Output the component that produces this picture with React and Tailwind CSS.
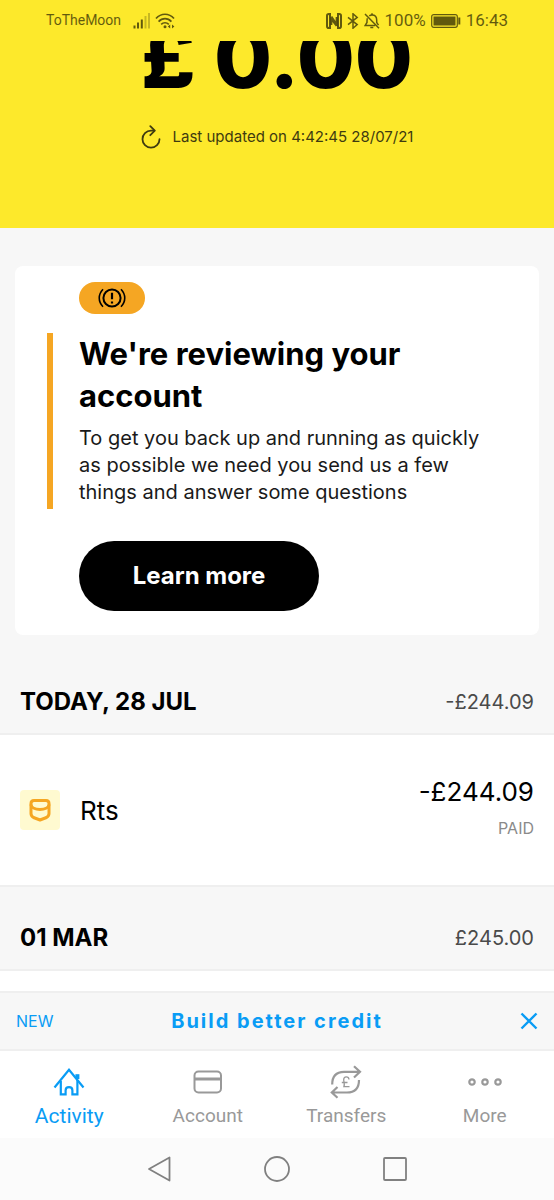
import React from 'react';

const SignalIcon = () => (
  <svg width="18" height="16" viewBox="0 0 18 16" fill="currentColor">
    <rect x="0.5" y="12.5" width="2" height="3" />
    <rect x="4" y="9.5" width="2" height="6" />
    <rect x="7.8" y="6.5" width="2" height="9" />
    <rect x="11.5" y="3" width="2" height="12.5" opacity="0.35" />
    <rect x="15" y="0" width="2" height="15.5" opacity="0.35" />
  </svg>
);

const WifiIcon = () => (
  <svg width="20" height="16" viewBox="0 0 20 16" fill="none" stroke="currentColor" strokeWidth="1.7">
    <path d="M1 5.5C6-.2 14-.2 19 5.5" />
    <path d="M3.6 8.6c3.6-4 9.2-4 12.8 0" />
    <path d="M6.2 11.4c2.2-2.2 5.4-2.2 7.6 0" />
    <circle cx="10" cy="13.8" r="1.5" fill="currentColor" stroke="none" />
    <path d="M15.2 11.6v4l-2.4-2zM17 11.6v4l2.4-2z" fill="currentColor" stroke="none" />
  </svg>
);

const NfcIcon = () => (
  <svg width="16" height="16" viewBox="0 0 16 16" fill="none" stroke="currentColor">
    <path d="M5 1H2.8C1.8 1 1 1.8 1 2.8v10.4c0 1 .8 1.8 1.8 1.8H4V1M11 15h2.2c1 0 1.8-.8 1.8-1.8V2.8c0-1-.8-1.8-1.8-1.8H12v14" strokeWidth="2" />
    <path d="M5.5 3.5L10.5 11V4M5.5 12V6.5L10.5 13" strokeWidth="1.7" />
  </svg>
);

const BluetoothIcon = () => (
  <svg width="12" height="16" viewBox="0 0 12 16" fill="none" stroke="currentColor" strokeWidth="1.5">
    <path d="M1 4.3l9.2 7.3L6 15.2V.8l4.2 3.6L1 11.7" />
  </svg>
);

const MutedBellIcon = () => (
  <svg width="16" height="16" viewBox="0 0 16 16" fill="none" stroke="currentColor" strokeWidth="1.5">
    <path d="M3.4 5.2C2.9 6.3 3 8 3 9.5L1.2 12.4h10M5.3 2.9C6 2.3 7 2 8 2c2.800 0 4.700 2 4.700 5v2.500l1.800 2.600" />
    <path d="M6.300 14.600h3M8 .300v1.500M1 1l14 14.300" />
  </svg>
);

const BatteryIcon = () => (
  <svg width="30" height="14" viewBox="0 0 30 14" fill="none">
    <rect x="0.7" y="0.7" width="25.600" height="12.600" rx="2" stroke="currentColor" strokeWidth="1.200" />
    <rect x="2.500" y="2.500" width="22" height="9" fill="currentColor" />
    <path d="M28.300 3.500v7" stroke="currentColor" strokeWidth="2" />
  </svg>
);

const RefreshIcon = () => (
  <svg width="20" height="24" viewBox="0 0 20 24" fill="none" stroke="currentColor" strokeWidth="1.800" strokeLinecap="round" strokeLinejoin="round">
    <path d="M13 5.700H10A8.500 8.500 0 1 0 18.500 14.200" />
    <path d="M9.300 1.200l4.500 4.500-4.500 4.500" />
  </svg>
);

const WarningIcon = () => (
  <svg width="28" height="22" viewBox="0 0 28 22" fill="none" stroke="black" strokeWidth="2">
    <circle cx="14" cy="11" r="8.600" />
    <path d="M5 2.200C0 7.500 0 14.500 5 19.800M23 2.200c5 5.300 5 12.300 0 17.600" strokeWidth="1.600" />
    <path d="M14 5.800v6.400M14 14.400v2.200" strokeWidth="2.200" />
  </svg>
);

const PotIcon = () => (
  <svg width="22" height="24" viewBox="0 0 22 24" fill="none" stroke="#f5a623" strokeWidth="3" strokeLinejoin="round">
    <path d="M2 5.500Q2 2.500 5 2.500H17Q20 2.500 20 5.500V15.500Q20 18 17.500 19.500L11 22 4.500 19.500Q2 18 2 15.500Z" />
    <path d="M2 6.500C2.500 13 19.500 13 20 6.500" />
  </svg>
);

const HomeIcon = () => (
  <svg width="32" height="28" viewBox="0 0 32 28" fill="none" stroke="currentColor" strokeWidth="2.200">
    <path d="M1.500 19.500L16 1.800 30.500 19.500" />
    <path d="M7.800 13v13.400h4.800V22.500c0-4.500 6.800-4.500 6.800 0v3.900h5V12" />
    <path d="M24.400 11V6.200" strokeWidth="4" />
  </svg>
);

const CardIcon = () => (
  <svg width="30" height="24" viewBox="0 0 30 24" fill="none" stroke="currentColor" strokeWidth="2">
    <rect x="1.500" y="1.500" width="26.500" height="21" rx="4" />
    <path d="M1.500 9h26.500" strokeWidth="3" />
  </svg>
);

const TransferIcon = () => (
  <svg width="32" height="34" viewBox="0 0 32 34" fill="none" stroke="currentColor" strokeWidth="2.200">
    <path d="M2.200 19.500C2.200 11 6 6.800 14 6.800h16M24 1.200l6 5.600-6 5.700" />
    <path d="M29 15c0 8.500-4 12.500-12 12.500H2M7.500 22L1.800 27.500l5.700 5.300" />
    <path d="M19 14.500c-.300-3.500-5.300-3.500-5.300.200 0 2.300 1.300 4 .200 7h5.600M11.800 17.500h5.700" strokeWidth="1.300" />
  </svg>
);

const MoreIcon = () => (
  <svg width="34" height="8" viewBox="0 0 34 8" fill="none" stroke="currentColor" strokeWidth="2.200">
    <circle cx="4" cy="4" r="2.700" />
    <circle cx="17" cy="4" r="2.700" />
    <circle cx="30" cy="4" r="2.700" />
  </svg>
);

const CloseIcon = () => (
  <svg width="18" height="18" viewBox="0 0 18 18" fill="none" stroke="currentColor" strokeWidth="2.400">
    <path d="M1.500 1.500l15 15M16.500 1.500l-15 15" />
  </svg>
);

const StatusBar = () => (
  <div className="flex h-[41px] items-center justify-between px-[46px] font-[Roboto,sans-serif] text-[#1f1c00]/70">
    <div className="flex items-center">
      <span className="text-[14px]">ToTheMoon</span>
      <span className="ml-3"><SignalIcon /></span>
      <span className="ml-1"><WifiIcon /></span>
    </div>
    <div className="flex items-center gap-[5px]">
      <NfcIcon />
      <BluetoothIcon />
      <MutedBellIcon />
      <span className="text-[17px]">100%</span>
      <BatteryIcon />
      <span className="text-[17px]">16:43</span>
    </div>
  </div>
);

const ReviewCard = () => (
  <section className="mx-[15px] mt-[38px] rounded-lg bg-white pt-4 pb-6 pl-8">
    <div className="ml-8 flex h-8 w-[66px] items-center justify-center rounded-full bg-[#f5a623]">
      <WarningIcon />
    </div>
    <div className="mt-[19px] border-l-6 border-[#f5a623] pl-[26px]">
      <h1 className="text-[31px] leading-[42px] font-bold">
        We're reviewing your<br />account
      </h1>
      <p className="mt-2 pb-[3px] text-[20px] leading-[27px] text-[#1a1a1a]">
        To get you back up and running as quickly<br />
        as possible we need you send us a few<br />
        things and answer some questions
      </p>
    </div>
    <button className="mt-8 ml-8 h-[70px] w-[240px] rounded-full bg-black text-[24px] font-bold text-white">
      Learn more
    </button>
  </section>
);

const DayHeader = ({ day, total }) => (
  <div className="flex h-[84px] items-center justify-between border-b-2 border-[#efefef] px-5 pt-5">
    <h2 className="text-[24px] font-bold">{day}</h2>
    <span className="text-[20px] text-[#4a4a4a]">{total}</span>
  </div>
);

const Transaction = ({ name, amount, status }) => (
  <div className="flex h-[152px] items-center border-b-2 border-[#efefef] bg-white px-5">
    <span className="flex size-10 items-center justify-center rounded-sm bg-[#fffad0]">
      <PotIcon />
    </span>
    <span className="ml-5 text-[26px]">{name}</span>
    <div className="ml-auto text-right">
      <p className="text-[26px] leading-[36px]">{amount}</p>
      <p className="text-[16px] leading-[36px] text-[#8a8a8a]">{status}</p>
    </div>
  </div>
);

const tabs = [
  { label: 'Activity', icon: HomeIcon, active: true },
  { label: 'Account', icon: CardIcon },
  { label: 'Transfers', icon: TransferIcon },
  { label: 'More', icon: MoreIcon },
];

const TabBar = () => (
  <nav className="grid h-[87px] grid-cols-4 bg-white font-[Roboto,sans-serif]">
    {tabs.map(({ label, icon: Icon, active }) => (
      <a
        key={label}
        href="#"
        className={`flex flex-col items-center pt-[13px] ${active ? 'text-[21px] text-[#099cf5]' : 'text-[19px] text-[#999999]'}`}
      >
        <span className="flex h-[36px] items-center"><Icon /></span>
        <span className="leading-8">{label}</span>
      </a>
    ))}
  </nav>
);

const SystemNav = () => (
  <div className="flex h-[62px] items-center justify-center gap-[92px] bg-[#fbfbfb] text-[#808080]">
    <button aria-label="Back">
      <svg width="26" height="28" viewBox="0 0 26 28" fill="none" stroke="currentColor" strokeWidth="1.800" strokeLinejoin="round">
        <path d="M23.500 2.500v23L3 14z" />
      </svg>
    </button>
    <button aria-label="Home">
      <svg width="26" height="28" viewBox="0 0 26 28" fill="none" stroke="currentColor" strokeWidth="1.800">
        <circle cx="13" cy="14" r="12" />
      </svg>
    </button>
    <button aria-label="Recents">
      <svg width="26" height="28" viewBox="0 0 26 28" fill="none" stroke="currentColor" strokeWidth="1.800">
        <rect x="2" y="3" width="22" height="22" rx="1" />
      </svg>
    </button>
  </div>
);

const App = () => {
  return (
    <div className="flex min-h-screen flex-col bg-[#f7f7f7] font-[Inter,sans-serif] text-black">
      <header className="bg-[#fde92b] pb-[77px]">
        <StatusBar />
        <div className="flex h-[56px] items-end justify-center overflow-hidden">
          <p className="shrink-0 text-[84px] leading-[78px] font-extrabold">£ 0.00</p>
        </div>
        <div className="mt-[26px] flex items-center justify-center gap-3 text-[#3f3b10]">
          <RefreshIcon />
          <span className="text-[15px] leading-7">Last updated on 4:42:45 28/07/21</span>
        </div>
      </header>

      <main className="flex flex-1 flex-col">
        <ReviewCard />
        <div className="mt-4">
          <DayHeader day="TODAY, 28 JUL" total="-£244.09" />
          <Transaction name="Rts" amount="-£244.09" status="PAID" />
          <DayHeader day="01 MAR" total="£245.00" />
        </div>
        <div className="min-h-5 flex-1 bg-white" />
      </main>

      <footer>
        <div className="flex h-[60px] items-center justify-between border-y-2 border-[#efefef] px-4 text-[#099cf5]">
          <span className="flex-1 text-[16px]">NEW</span>
          <a href="#" className="text-[20px] font-bold tracking-widest">Build better credit</a>
          <div className="flex flex-1 justify-end">
            <button aria-label="Close"><CloseIcon /></button>
          </div>
        </div>
        <TabBar />
        <SystemNav />
      </footer>
    </div>
  );
};

export default App;
